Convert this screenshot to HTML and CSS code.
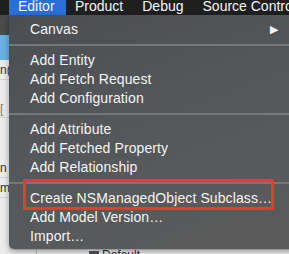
FILE: index.html
```html
<!DOCTYPE html>
<html>
<head>
<meta charset="utf-8">
<link rel="stylesheet" href="styles.css">
</head>
<body>
<div class="screen">
  <div class="menubar">
    <span class="mb-item active">Editor</span>
    <span class="mb-item">Product</span>
    <span class="mb-item">Debug</span>
    <span class="mb-item">Source Control</span>
  </div>
  <div class="app">
    <div class="side">
      <div class="side-dark"></div>
      <div class="side-blue"></div>
      <div class="side-row">n(</div>
      <div class="side-white"></div>
      <div class="side-row small">[</div>
      <div class="side-white tall"></div>
      <div class="side-row">n</div>
      <div class="side-row">m</div>
    </div>
    <div class="main">
      <div class="main-spacer"></div>
      <div class="default-row"><span class="tbl-icon"></span>Default</div>
    </div>
  </div>

  <div class="menu">
    <div class="item has-sub">Canvas<span class="arrow">&#9654;</span></div>
    <div class="sep"></div>
    <div class="item">Add Entity</div>
    <div class="item">Add Fetch Request</div>
    <div class="item">Add Configuration</div>
    <div class="sep"></div>
    <div class="item">Add Attribute</div>
    <div class="item">Add Fetched Property</div>
    <div class="item">Add Relationship</div>
    <div class="sep"></div>
    <div class="item">Create NSManagedObject Subclass…</div>
    <div class="item">Add Model Version…</div>
    <div class="item">Import…</div>
    <div class="highlight-box"></div>
  </div>
</div>
</body>
</html>
```

FILE: styles.css
```css
* { box-sizing: border-box; }
html, body {
  margin: 0;
  padding: 0;
  width: 289px;
  height: 254px;
  overflow: hidden;
  background: #e9e9e9;
  font-family: "Liberation Sans", Arial, sans-serif;
}
.screen {
  position: relative;
  width: 289px;
  height: 254px;
  overflow: hidden;
}
.menubar {
  height: 15px;
  background: #1f1f20;
  display: flex;
  align-items: flex-start;
  padding-left: 9px;
  white-space: nowrap;
  color: #f4f4f4;
  font-size: 14px;
}
.mb-item {
  height: 15px;
  line-height: 12px;
  padding: 0 10px 0 9px;
  flex: none;
}
.mb-item.active {
  background: #2a6fd7;
  width: 57px;
}
.app {
  display: flex;
  height: 239px;
}
.side {
  width: 12px;
  display: flex;
  flex-direction: column;
  background: #ececec;
  font-size: 12px;
  color: #333;
}
.side-dark { height: 20px; background: #4a4a4a; }
.side-blue { height: 25px; background: #6ab1e3; }
.side-row {
  height: 20px;
  line-height: 20px;
  border-bottom: 1px solid #d5d5d5;
  overflow: hidden;
}
.side-row.small { height: 18px; line-height: 18px; color: #777; }
.side-white { height: 20px; }
.side-white.tall { height: 40px; }
.main {
  flex: 1;
  display: flex;
  flex-direction: column;
  background: #f2f2f2;
}
.main-spacer { flex: 1; }
.default-row {
  height: 6px;
  padding-left: 52px;
  font-size: 12px;
  color: #333;
  line-height: 14px;
  overflow: hidden;
  border-left: 1px solid #bbb;
  margin-left: 24px;
}
.tbl-icon {
  display: inline-block;
  width: 10px;
  height: 8px;
  background: #555;
  margin-right: 3px;
}

.menu {
  position: absolute;
  left: 9px;
  top: 15px;
  width: 290px;
  height: 234px;
  background: linear-gradient(160deg, #4a4e51 0%, #54575a 40%, #5b5b5b 100%);
  border-radius: 0 0 5px 5px;
  box-shadow: 0 1px 0 #9a9a9a, 0 3px 6px rgba(0,0,0,0.35);
  padding-top: 5px;
  color: #f4f4f4;
  font-size: 14px;
  letter-spacing: 0.1px;
}
.item {
  height: 19px;
  line-height: 19px;
  padding-left: 21px;
  white-space: nowrap;
  display: flex;
  align-items: center;
}
.arrow {
  margin-left: auto;
  margin-right: 21px;
  font-size: 11px;
}
.sep {
  height: 2px;
  margin: 5px 0 5px 0;
  background: #75787a;
}
.highlight-box {
  position: absolute;
  left: 14px;
  top: 164px;
  width: 251px;
  height: 31px;
  border: 3px solid #ea3a2e;
  border-radius: 1px;
}
```
